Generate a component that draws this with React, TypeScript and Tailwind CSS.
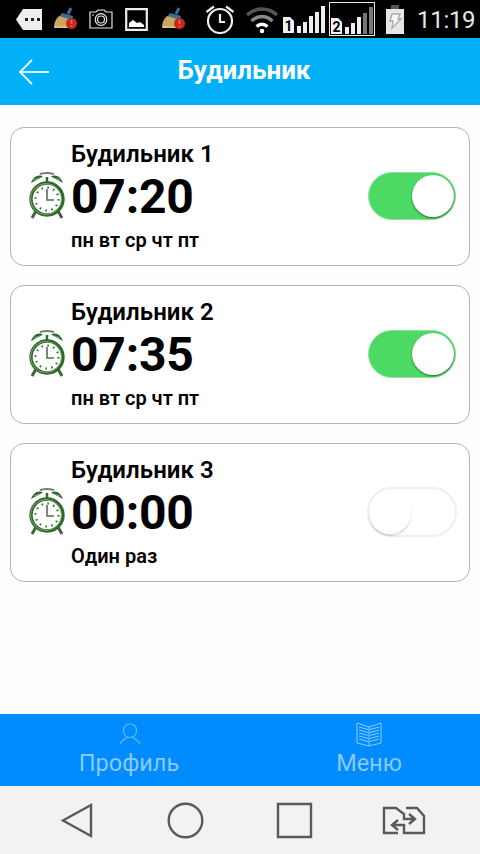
import { useState } from "react";

type Alarm = {
  id: number;
  name: string;
  time: string;
  repeat: string;
  enabled: boolean;
};

const ALARMS: Alarm[] = [
  { id: 1, name: "Будильник 1", time: "07:20", repeat: "пн вт ср чт пт", enabled: true },
  { id: 2, name: "Будильник 2", time: "07:35", repeat: "пн вт ср чт пт", enabled: true },
  { id: 3, name: "Будильник 3", time: "00:00", repeat: "Один раз", enabled: false },
];

function BroomIcon({ className }: { className: string }) {
  return (
    <svg viewBox="0 0 24 24" className={className} aria-hidden="true">
      <path d="M14 7L17 1" stroke="#2f6f9f" strokeWidth="3" />
      <path d="M8 6l11 3-1 5-13-4z" fill="#3f6f90" />
      <path d="M5 9l13 4-3 8H0c0-6 2-9 5-12z" fill="#c9a660" />
      <path d="M1 20h13" stroke="#e0c48a" strokeWidth="1.500" />
      <circle cx="17.500" cy="16.500" r="5.500" fill="#c8281c" />
      <path d="M17.500 13v4M17.500 18.500V20" stroke="#e8705f" strokeWidth="1.600" />
    </svg>
  );
}

function SignalIcon({ sim, weak }: { sim: string; weak: boolean }) {
  return (
    <svg viewBox="0 0 43 30" className="h-[30px] w-[43px] shrink-0" aria-hidden="true">
      <path d="M0 13h7l4 4v12H0z" fill="#f2f2f2" />
      <text x="1.500" y="27" fontFamily="Roboto, sans-serif" fontSize="14" fontWeight="700" fill="#000">
        {sim}
      </text>
      <path d="M14 22h4v7h-4zM20 18h4v11h-4zM26 12h4v17h-4z" fill="#eee" />
      <path d="M32 8h4v21h-4zM38 2h4v27h-4z" fill={weak ? "#777" : "#eee"} />
    </svg>
  );
}

function StatusBar() {
  return (
    <div className="flex h-[38px] shrink-0 items-center bg-black">
      <svg viewBox="0 0 26 21" className="ml-4 h-[21px] w-[26px] shrink-0" aria-hidden="true">
        <path d="M7 0h19v21H7L0 10.500z" fill="#eee" />
        <path d="M9 9h3v3H9zM15 9h3v3h-3zM21 9h3v3h-3z" fill="#222" />
      </svg>
      <BroomIcon className="ml-3 h-6 w-6 shrink-0" />
      <svg
        viewBox="0 0 24 20"
        className="ml-[11px] h-5 w-6 shrink-0"
        fill="none"
        stroke="#e6e6e6"
        strokeWidth="1.200"
        aria-hidden="true"
      >
        <path d="M1 3h6l2-2h6l2 2h6v16H1z" />
        <circle cx="12" cy="10.500" r="5.800" />
        <circle cx="12" cy="10.500" r="3.500" />
        <path d="M3 6h2" />
      </svg>
      <svg viewBox="0 0 23 23" className="ml-3 h-[23px] w-[23px] shrink-0" aria-hidden="true">
        <path d="M1.200 1.200h20.600v20.600H1.200z" fill="none" stroke="#eee" strokeWidth="2.200" />
        <path d="M4 19v-4l4-3 4 3 3-1 4 3v2z" fill="#fff" />
      </svg>
      <BroomIcon className="ml-[14px] h-6 w-6 shrink-0" />
      <svg
        viewBox="0 0 30 30"
        className="ml-[19px] h-[30px] w-[30px] shrink-0"
        fill="none"
        stroke="#eee"
        strokeWidth="2.200"
        aria-hidden="true"
      >
        <circle cx="15" cy="17" r="12" />
        <path d="M15 10v8h5M1.500 8L9 2.500M28.500 8L21 2.500" />
      </svg>
      <svg
        viewBox="0 0 34 28"
        className="mt-0.5 ml-2.5 h-7 w-[34px] shrink-0"
        fill="none"
        strokeWidth="3.400"
        aria-hidden="true"
      >
        <path d="M2 9c9-8 21-8 30 0" stroke="#555" />
        <path d="M6.500 15c6.500-6 14.500-6 21 0" stroke="#888" />
        <path d="M11.500 20.500c3.500-3 7.500-3 11 0" stroke="#fff" />
        <circle cx="17" cy="25" r="2.200" fill="#fff" />
      </svg>
      <div className="ml-1">
        <SignalIcon sim="1" weak={false} />
      </div>
      <div className="ml-[3px] flex h-[34px] w-[46px] shrink-0 items-end justify-center border border-gray-200">
        <SignalIcon sim="2" weak />
      </div>
      <svg viewBox="0 0 18 29" className="ml-[11px] h-[29px] w-[18px] shrink-0" aria-hidden="true">
        <path d="M5 0h8v4H5z" fill="#555" />
        <path d="M0 4h18v25H0z" fill="#e6e6e6" />
        <path d="M6 9h8l-2 5h3l-9 9 1-7H4z" fill="#f8f8f8" stroke="#aaa" strokeWidth="1.400" />
      </svg>
      <span className="mt-0.5 ml-[13px] text-[24px] leading-none tracking-[-0.3px] text-gray-200">
        11:19
      </span>
    </div>
  );
}

function AlarmClockIcon() {
  return (
    <svg viewBox="0 0 36 48" className="h-12 w-9" fill="none" aria-hidden="true">
      <path d="M7 39l-4 7M29 39l4 7" stroke="#4a5f4a" strokeWidth="3" />
      <path d="M11 2.500c2-2 12-2 14 0" stroke="#6e7d70" strokeWidth="1.800" />
      <path d="M2 11C4 5 9 1.500 14 4.500zM34 11c-2-6-7-9.500-12-6.500z" fill="#2b6a2b" />
      <path d="M5 8l6-2M31 8l-6-2" stroke="#91a892" />
      <path d="M18 5v6" stroke="#39603a" strokeWidth="2.500" />
      <circle cx="18" cy="27" r="16" fill="#fff" stroke="#2c6b25" strokeWidth="3.400" />
      <circle cx="17" cy="27" r="15.500" stroke="#94ad88" strokeWidth=".8" />
      <circle
        cx="18"
        cy="27"
        r="11.500"
        stroke="#3f6e40"
        strokeWidth="2.200"
        strokeDasharray="1.600 4.420"
      />
      <path d="M18 17v11h7" stroke="#5c6b5c" strokeWidth="1.600" />
    </svg>
  );
}

function Toggle({ checked, onChange, label }: { checked: boolean; onChange: () => void; label: string }) {
  return (
    <button
      type="button"
      role="switch"
      aria-checked={checked}
      aria-label={label}
      onClick={onChange}
      className={
        checked
          ? "flex h-12 w-[88px] items-center justify-end rounded-full border border-[#8fdf9d] bg-[#4cd964] pr-px"
          : "-mr-px flex h-[50px] w-[90px] items-center justify-start rounded-full border-2 border-[#f0f0f0] bg-white"
      }
    >
      <span
        className={
          checked
            ? "h-[42px] w-[42px] rounded-full bg-white shadow-[0_1px_2px_rgba(0,0,0,0.5)]"
            : "h-11 w-[42px] rounded-full bg-white shadow-[0_2px_2px_rgba(0,0,0,0.15)]"
        }
      />
    </button>
  );
}

function AlarmCard({ alarm, onToggle }: { alarm: Alarm; onToggle: () => void }) {
  return (
    <div className="flex h-[139px] items-center rounded-[14px] border border-[#b4b4b4] bg-white pr-[13px] pb-0.5 pl-[18px]">
      <AlarmClockIcon />
      <div className="ml-1.5 flex-1 font-bold text-black">
        <div className="text-[24px] leading-7 font-semibold tracking-[0.05px]">{alarm.name}</div>
        <div className="pt-px text-[48px] leading-[56px] tracking-[-0.2px]">{alarm.time}</div>
        <div className="mt-[3px] text-[20px] leading-6 font-semibold">{alarm.repeat}</div>
      </div>
      <Toggle checked={alarm.enabled} onChange={onToggle} label={alarm.name} />
    </div>
  );
}

function TabBar() {
  return (
    <div className="grid h-[72px] shrink-0 grid-cols-[258px_222px] bg-[#008cff] text-[23.5px] leading-7 text-[#8cc8fa]">
      <div className="flex flex-col items-center pt-2">
        <svg
          viewBox="0 0 22 24"
          className="ml-0.5 h-6 w-[22px]"
          fill="none"
          stroke="#65b9ff"
          strokeWidth="1.200"
          aria-hidden="true"
        >
          <path d="M11 2C7 2 4.500 4.500 4.500 8.500S7 15.500 11 15.500s6.500-3 6.500-7S15 2 11 2z" />
          <path d="M1 22c1-3 3-4 7-6.500M21 22c-1-3-3-4-7-6.500" />
        </svg>
        <span className="mt-[3px]">Профиль</span>
      </div>
      <div className="flex flex-col items-center pt-2">
        <svg
          viewBox="0 0 28 26"
          className="h-[26px] w-7"
          fill="none"
          stroke="#8fcbff"
          strokeWidth="1"
          aria-hidden="true"
        >
          <path d="M14 5L2 1v20l12 3 12-3V1L14 5zM14 5v19" />
          <path d="M4 5l9 2.500M4 8l9 2.500M4 11l9 2.500M4 14l9 2.500M4 17l9 2.500M24 5l-9 2.500M24 8l-9 2.500M24 11l-9 2.500M24 14l-9 2.500M24 17l-9 2.500" />
        </svg>
        <span className="mt-px">Меню</span>
      </div>
    </div>
  );
}

function SystemNav() {
  return (
    <div className="flex h-[68px] shrink-0 items-center bg-[#f2f2f2] pl-[60px]">
      <svg
        viewBox="0 0 366 38"
        className="h-[38px] w-[366px]"
        fill="none"
        stroke="#5a5a5a"
        strokeWidth="2.400"
        aria-hidden="true"
      >
        <path d="M31 4v31L3 19.500z" />
        <circle cx="125.500" cy="19.500" r="16.800" />
        <path d="M218 3h33v33h-33z" />
        <path d="M338 32h-14V7h12l8 6v5h10M349 13l6 5-6 5M346 7h11l7 8v17h-20V24h-11M338 19l-6 5 6 5" />
      </svg>
    </div>
  );
}

export default function App() {
  const [alarms, setAlarms] = useState(ALARMS);

  const toggle = (id: number) =>
    setAlarms((prev) =>
      prev.map((a) => (a.id === id ? { ...a, enabled: !a.enabled } : a)),
    );

  return (
    <div className="flex h-[854px] w-[480px] flex-col overflow-hidden bg-[#fefefe] font-[Roboto,sans-serif]">
      <StatusBar />
      <header className="grid h-[67px] shrink-0 grid-cols-[64px_1fr_56px] items-center bg-[#02aff9] text-white">
        <button type="button" aria-label="Назад" className="pl-[18px]">
          <svg
            viewBox="0 0 32 26"
            className="h-[26px] w-8"
            fill="none"
            stroke="#d9f6ff"
            strokeWidth="2"
            aria-hidden="true"
          >
            <path d="M31 13H2M14 1L2 13l12 12" />
          </svg>
        </button>
        <h1 className="pb-1 text-center text-[26px] leading-none font-bold">Будильник</h1>
      </header>
      <main className="flex flex-1 flex-col gap-[19px] px-[10px] pt-[22px]">
        {alarms.map((a) => (
          <AlarmCard key={a.id} alarm={a} onToggle={() => toggle(a.id)} />
        ))}
      </main>
      <TabBar />
      <SystemNav />
    </div>
  );
}
